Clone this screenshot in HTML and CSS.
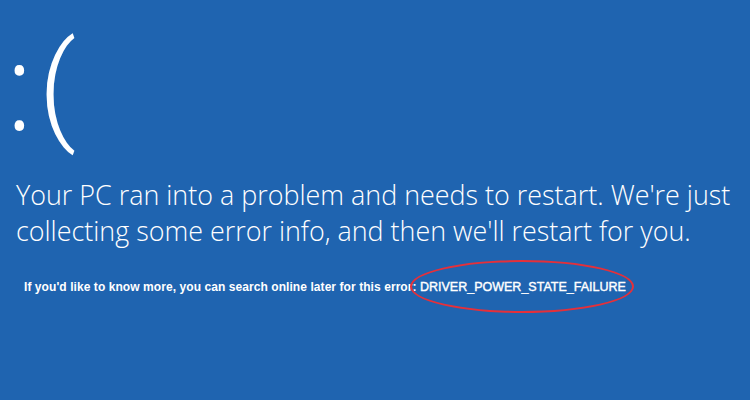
FILE: index.html
```html
<!DOCTYPE html>
<html>
<head>
<meta charset="utf-8">
<link rel="stylesheet" href="styles.css">
</head>
<body>
<div class="screen">
  <div class="face"><span class="colon">:</span><span class="paren">(</span></div>
  <p class="message">Your PC ran into a problem and needs to restart. We're just collecting some error info, and then we'll restart for you.</p>
  <p class="info">If you'd like to know more, you can search online later for this error: <span class="code">DRIVER_POWER_STATE_FAILURE</span></p>
</div>
</body>
</html>
```
FILE: styles.css
```css
html, body {
  margin: 0;
  padding: 0;
  background: #1f64b0;
}
.screen {
  width: 750px;
  height: 400px;
  background: #1f64b0;
  color: #ffffff;
  overflow: hidden;
  padding: 12px 0 0 8px;
  box-sizing: border-box;
}
.face {
  font-family: Roboto, sans-serif;
  font-weight: 300;
  font-size: 118px;
  line-height: 143px;
  margin: 0 0 0 -3px;
}
.colon {
  font-family: "Open Sans", sans-serif;
  font-size: 120px;
  vertical-align: -2px;
  margin-right: 5px;
}
.message {
  font-family: "Open Sans", sans-serif;
  font-weight: 300;
  font-size: 26.9px;
  line-height: 36px;
  margin: 17px 0 0 8px;
  width: 735px;
}
.info {
  font-family: "Liberation Sans", Arial, sans-serif;
  font-weight: bold;
  font-size: 12px;
  letter-spacing: 0.07px;
  margin: 31px 0 0 16px;
}
.code {
  position: relative;
  font-size: 12.5px;
  font-weight: normal;
  letter-spacing: 0;
  -webkit-text-stroke: 0.4px #fff;
}
.code::after {
  content: "";
  position: absolute;
  left: -10px;
  right: -8px;
  top: -20px;
  bottom: -19px;
  border: 2px solid #e5303a;
  border-radius: 50%;
}
```
